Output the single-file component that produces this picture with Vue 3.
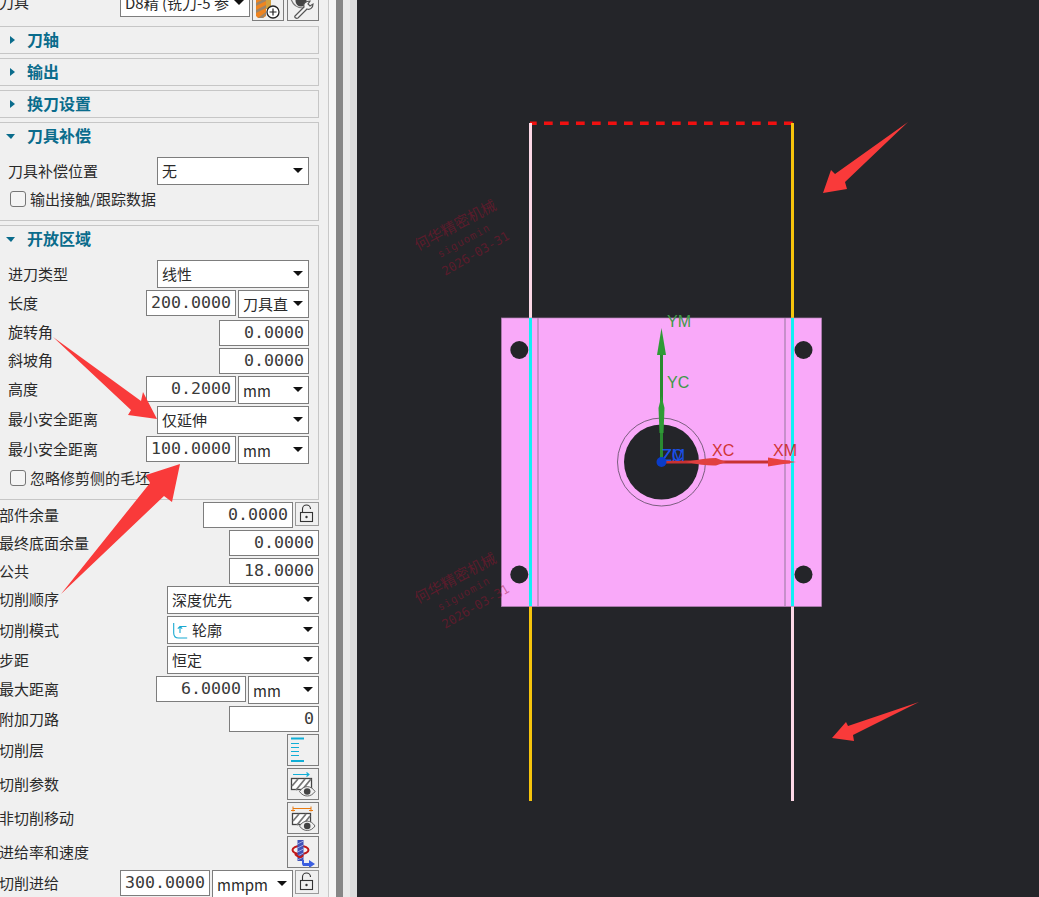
<script setup>
</script>

<template>
  <div class="app">
    <aside class="panel">
      <div class="scroll">
        <div class="row tool">
          <span class="lab">刀具</span>
          <div class="sel w130"><span>D8精 (铣刀-5 参</span><i class="caret"></i></div>
          <button class="ib">
            <svg width="30" height="30" viewBox="0 0 30 30">
              <rect x="12" y="9" width="6" height="10" fill="#d0a040" />
              <path d="M3 0h10v26l-3 2H5l-2-2z" fill="#ee8420" />
              <path d="M3 13l10-5v3L3 16zM3 20l10-5v3L3 23zM5 28l8-6v2l-3 4z" fill="#9c8468" />
              <circle cx="20" cy="22" r="6" fill="#fff" stroke="#222" stroke-width="1.300" />
              <path d="M16.500 22h7M20 18.500v7" stroke="#222" stroke-width="1.200" />
            </svg>
          </button>
          <button class="ib">
            <svg width="30" height="30" viewBox="0 0 30 30">
              <path d="M3 9c2 6 6 9 12 9" fill="none" stroke="#777" stroke-width="1.200" />
              <circle cx="13" cy="11" r="5.500" fill="#444" />
              <path d="M7 26l9-9c-1-3 1-6 6-6l-2 3 2 2 3-2c0 4-3 6-6 5l-9 9c-2 1-4-1-3-2z" fill="#f4f4f4" stroke="#555" stroke-width="1.200" />
            </svg>
          </button>
        </div>

        <div class="grp closed"><div class="hd"><i class="tri-r"></i>刀轴</div></div>
        <div class="grp closed"><div class="hd"><i class="tri-r"></i>输出</div></div>
        <div class="grp closed"><div class="hd"><i class="tri-r"></i>换刀设置</div></div>

        <div class="grp">
          <div class="hd"><i class="tri-d"></i>刀具补偿</div>
          <div class="body">
            <div class="row s low"><span class="lab">刀具补偿位置</span><div class="sel w152"><span>无</span><i class="caret"></i></div></div>
            <label class="chk"><i class="box"></i><span>输出接触/跟踪数据</span></label>
          </div>
        </div>

        <div class="grp">
          <div class="hd"><i class="tri-d"></i>开放区域</div>
          <div class="body">
            <div class="row s low"><span class="lab">进刀类型</span><div class="sel w152"><span>线性</span><i class="caret"></i></div></div>
            <div class="row s"><span class="lab">长度</span><div class="num">200.0000</div><div class="sel w71"><span>刀具直</span><i class="caret"></i></div></div>
            <div class="row"><span class="lab">旋转角</span><div class="num">0.0000</div></div>
            <div class="row"><span class="lab">斜坡角</span><div class="num">0.0000</div></div>
            <div class="row s"><span class="lab">高度</span><div class="num">0.2000</div><div class="sel w71"><span class="u">mm</span><i class="caret"></i></div></div>
            <div class="row s"><span class="lab">最小安全距离</span><div class="sel w152"><span>仅延伸</span><i class="caret"></i></div></div>
            <div class="row s"><span class="lab">最小安全距离</span><div class="num">100.0000</div><div class="sel w71"><span class="u">mm</span><i class="caret"></i></div></div>
            <label class="chk"><i class="box"></i><span>忽略修剪侧的毛坯</span></label>
          </div>
        </div>

        <div class="list">
          <div class="row low"><span class="lab">部件余量</span><div class="num">0.0000</div><button class="lock"><svg width="22" height="22" viewBox="0 0 22 22"><path d="M6.500 9V6a4 4 0 0 1 8 0" fill="none" stroke="#333" stroke-width="1.100" /><rect x="4.500" y="9.500" width="12" height="9" fill="none" stroke="#333" stroke-width="1.100" /><circle cx="10.500" cy="14" r="1.200" fill="#333" /></svg></button></div>
          <div class="row low"><span class="lab">最终底面余量</span><div class="num">0.0000</div></div>
          <div class="row low"><span class="lab">公共</span><div class="num">18.0000</div></div>
          <div class="row s"><span class="lab">切削顺序</span><div class="sel w152"><span>深度优先</span><i class="caret"></i></div></div>
          <div class="row s low"><span class="lab">切削模式</span><div class="sel w152">
            <svg class="mode" width="15" height="18" viewBox="0 0 15 18"><path d="M.7 2v10c0 3 2 5 5 5h8.500M7 12V5.500h6.500M4.800 7.700L7 5.500l2.200 2.200" fill="none" stroke="#19a9d1" stroke-width="1.100" /></svg>
            <span>轮廓</span><i class="caret"></i></div></div>
          <div class="row s low"><span class="lab">步距</span><div class="sel w152"><span>恒定</span><i class="caret"></i></div></div>
          <div class="row s"><span class="lab">最大距离</span><div class="num">6.0000</div><div class="sel w71"><span class="u">mm</span><i class="caret"></i></div></div>
          <div class="row low"><span class="lab">附加刀路</span><div class="num">0</div></div>
          <div class="row b low"><span class="lab">切削层</span><button class="ib">
            <svg width="30" height="30" viewBox="0 0 30 30">
              <path d="M3 3.500h13M3 26h13" stroke="#10aed6" stroke-width="2" />
              <path d="M3 8.500h8M3 12.500h8M3 16.500h8M3 20.500h8" stroke="#10aed6" stroke-width="1" />
            </svg>
          </button></div>
          <div class="row b low"><span class="lab">切削参数</span><button class="ib">
            <svg width="30" height="30" viewBox="0 0 30 30">
              <path d="M5 5.500h16M18.500 3.500l2.500 2-2.500 2" fill="none" stroke="#10aed6" stroke-width="1.100" />
              <rect x="3.500" y="9.500" width="20" height="11" fill="#fff" stroke="#444" stroke-width="1.300" />
              <path d="M4 17l6-7M8 21l9-11M14 21l9-11" stroke="#777" stroke-width="1.800" />
              <path d="M11.500 22.500c4-6.500 11.500-6.500 15.500 0c-4 6-11.500 6-15.500 0z" fill="#f0f0f0" stroke="#666" stroke-width="1" />
              <circle cx="19.200" cy="22.500" r="3.300" fill="#444" />
            </svg>
          </button></div>
          <div class="row b low"><span class="lab">非切削移动</span><button class="ib">
            <svg width="30" height="30" viewBox="0 0 30 30">
              <path d="M5 5.500h18M5 3.500v5M23 3.500v5M3 7.500h4M21 7.500h4" fill="none" stroke="#e87a10" stroke-width="1" />
              <rect x="4.500" y="10.500" width="18" height="11" fill="#fff" stroke="#444" stroke-width="1.300" />
              <path d="M5 18l6-7M9 22l9-11M15 22l7-9" stroke="#777" stroke-width="1.800" />
              <path d="M11.500 23c4-6.500 11.500-6.500 15.500 0c-4 6-11.500 6-15.500 0z" fill="#f0f0f0" stroke="#666" stroke-width="1" />
              <circle cx="19.200" cy="23" r="3.300" fill="#444" />
            </svg>
          </button></div>
          <div class="row b low"><span class="lab">进给率和速度</span><button class="ib">
            <svg width="30" height="30" viewBox="0 0 30 30">
              <ellipse cx="12.500" cy="13" rx="8" ry="4" fill="none" stroke="#c01818" stroke-width="2" />
              <rect x="9.500" y="3" width="6" height="21" fill="#4052b8" />
              <path d="M9.500 7l6-3M9.500 11l6-3M9.500 15l6-3M9.500 19l6-3M9.500 23l6-3" stroke="#9aa4e0" stroke-width="1" />
              <path d="M15 18c-1 2-3 4-8-1" fill="none" stroke="#c01818" stroke-width="2" />
              <path d="M14 23h2v3h5v-3l6 4-6 4v-2h-6l-1-2z" fill="#3b5ee0" />
            </svg>
          </button></div>
          <div class="row low"><span class="lab">切削进给</span><div class="num">300.0000</div><div class="sel w81"><span class="u">mmpm</span><i class="caret"></i></div><button class="lock"><svg width="22" height="22" viewBox="0 0 22 22"><path d="M6.500 9V6a4 4 0 0 1 8 0" fill="none" stroke="#333" stroke-width="1.100" /><rect x="4.500" y="9.500" width="12" height="9" fill="none" stroke="#333" stroke-width="1.100" /><circle cx="10.500" cy="14" r="1.200" fill="#333" /></svg></button></div>
        </div>
      </div>
    </aside>

    <div class="strips"><i class="s1"></i><i class="s2"></i><i class="s3"></i><i class="s4"></i></div>

    <svg class="view" width="682" height="897" viewBox="357 0 682 897">
      <rect x="357" y="0" width="682" height="897" fill="#242529" />

      <path d="M530 123.300H793" stroke="#f01010" stroke-width="3.500" stroke-dasharray="8.700 7.300" stroke-dashoffset="2" />
      <path d="M530.500 123V318" stroke="#fcd8e6" stroke-width="3" />
      <path d="M792.500 123V318" stroke="#f6c40c" stroke-width="3" />
      <path d="M530.500 606V801" stroke="#f6c40c" stroke-width="3" />
      <path d="M792.500 606V801" stroke="#fcd8e6" stroke-width="3" />

      <rect x="501.500" y="318" width="320" height="288.500" fill="#f9a9f9" stroke="#b583b8" stroke-width=".7" />
      <path d="M538 318V606M785 318V606" stroke="#bb8ac0" stroke-width="1.600" />
      <path d="M530.500 318V606M792.500 318V606" stroke="#10f0f4" stroke-width="3" />

      <g fill="#242529">
        <circle cx="519.300" cy="350" r="9" />
        <circle cx="803.500" cy="350" r="9" />
        <circle cx="519.300" cy="574.500" r="9" />
        <circle cx="803.500" cy="574.500" r="9" />
        <circle cx="661.500" cy="462" r="37.500" />
      </g>
      <circle cx="661.500" cy="462" r="44" fill="none" stroke="#5a4a60" stroke-width=".8" />

      <g class="wm" fill="#a01030" fill-opacity=".45">
        <text transform="translate(418 251) rotate(-28)" font-size="15">何华精密机械</text>
        <text transform="translate(440 258) rotate(-29)" font-size="10.500" letter-spacing="1">siguomin</text>
        <text transform="translate(445 276) rotate(-30)" font-size="12.500">2026-03-31</text>
        <text transform="translate(418 604) rotate(-28)" font-size="15">何华精密机械</text>
        <text transform="translate(440 611) rotate(-29)" font-size="10.500" letter-spacing="1">siguomin</text>
        <text transform="translate(445 629) rotate(-30)" font-size="12.500">2026-03-31</text>
      </g>

      <g class="ax">
        <path d="M661.500 462V350" stroke="#2a8a30" stroke-width="3" />
        <path d="M661.500 328L666 355H657z" fill="#2f9a36" />
        <path d="M661.500 396l3 12l-1 25h-4l-1-25z" fill="#2f9a36" />
        <path d="M661.500 462H790" stroke="#c83232" stroke-width="3" />
        <path d="M796 462l-28 4.500v-9z" fill="#e84040" />
        <path d="M686 462Q705 458 716 458L726 462L716 465.500Q705 466 686 462z" fill="#e04040" />
        <text x="667" y="327" font-size="16" fill="#3f9a48">YM</text>
        <text x="667" y="388" font-size="16" fill="#3f9a48">YC</text>
        <text x="712" y="456" font-size="16" fill="#cf3535">XC</text>
        <text x="773" y="456" font-size="16" fill="#cf3535">XM</text>
        <text x="662" y="461" font-size="16" fill="#1a50e8">ZC</text>
        <text x="662" y="461" font-size="16" fill="#1a50e8">ZM</text>
        <circle cx="661.500" cy="462" r="5" fill="#0a3cc8" />
      </g>
    </svg>

    <svg class="over" width="1039" height="897" viewBox="0 0 1039 897">
      <g fill="#f93a3a">
        <path d="M908 122L845 182L847 189L823 193L831 170L835 174z" />
        <path d="M919 702L853 735L854 741L832 738L846 722L848 726z" />
        <path d="M53 337L141 401L143 392L157 419L128 415L131 410z" />
        <path d="M61 594L150 483L146 475L180 464L172 502L164 496z" />
      </g>
    </svg>
  </div>
</template>

<style>
html, body { margin: 0; background: #f0f0f0; overflow: hidden; }
</style>

<style scoped>
.app {
  position: relative;
  display: flex;
  width: 1039px;
  height: 897px;
  overflow: hidden;
  font-family: "Noto Sans CJK SC", "Liberation Sans", sans-serif;
  font-size: 15px;
  color: #2a2a2a;
}
.panel {
  width: 328px;
  height: 897px;
  flex: none;
  overflow: hidden;
  background: #f0f0f0;
}
.scroll {
  width: 320px;
  margin: -11px 0 0 -1px;
}
.row {
  display: flex;
  align-items: flex-start;
  justify-content: flex-end;
  gap: 2px;
  min-height: 26px;
}
.row.s { min-height: 28px; }
.row.b { min-height: 32px; }
.row > .lab {
  flex: 1;
  line-height: 24px;
  white-space: nowrap;
}
.row.s > .lab { line-height: 26px; }
.row.b > .lab { line-height: 30px; }
.row.low > .lab { padding-top: 1px; }
.tool { min-height: 32px; margin-bottom: 5px; }
.tool > .lab { line-height: 26px; }
.tool .ib + .ib { margin-left: 1px; }

.grp {
  margin: 0 0 4px -3px;
  border: 1px solid #c6c6c6;
  box-sizing: border-box;
}
.grp.closed { height: 28px; }
.hd {
  display: flex;
  align-items: center;
  height: 26px;
  box-sizing: border-box;
  padding: 0 0 2px 30px;
  position: relative;
  font-size: 16px;
  font-weight: 700;
  color: #0a6c8c;
}
.tri-r, .tri-d {
  position: absolute;
  width: 0;
  height: 0;
}
.tri-r {
  left: 13px;
  top: 9px;
  border-left: 5px solid #0a6c8c;
  border-top: 4px solid transparent;
  border-bottom: 4px solid transparent;
}
.tri-d {
  left: 9px;
  top: 11px;
  border-top: 5px solid #0a6c8c;
  border-left: 5px solid transparent;
  border-right: 4px solid transparent;
}
.body {
  display: flex;
  flex-direction: column;
  gap: 2px;
  padding: 8px 9px 11px 11px;
}
.chk {
  display: flex;
  align-items: center;
  height: 20px;
  margin-top: 2px;
  padding-left: 2px;
  white-space: nowrap;
}
.chk span { margin-top: -2px; }
.box {
  width: 14px;
  height: 14px;
  margin-right: 4px;
  border: 1px solid #767676;
  border-radius: 3px;
  background: #f4f4f4;
}
.list {
  display: flex;
  flex-direction: column;
  gap: 2px;
  margin-top: -2px;
}
.sel {
  position: relative;
  display: flex;
  align-items: center;
  height: 28px;
  box-sizing: border-box;
  padding: 0 18px 2px 4px;
  border: 1px solid #7d7d7d;
  background: #fff;
  white-space: nowrap;
  overflow: hidden;
}
.u { margin-top: 2px; }
.w130 { width: 130px; }
.w152 { width: 152px; }
.w71 { width: 71px; }
.w81 { width: 81px; }
.caret {
  position: absolute;
  right: 5px;
  top: 10px;
  border-top: 5px solid #111;
  border-left: 5px solid transparent;
  border-right: 5px solid transparent;
}
.mode { margin: 2px 4px 0 1px; flex: none; }
.num {
  width: 90px;
  height: 26px;
  box-sizing: border-box;
  border: 1px solid #7d7d7d;
  background: #fff;
  padding-right: 4px;
  text-align: right;
  font-family: "DejaVu Sans Mono", "Liberation Mono", monospace;
  font-size: 16.6px;
  line-height: 23px;
  color: #3a3a3a;
}
.ib {
  display: flex;
  align-items: center;
  justify-content: center;
  width: 32px;
  height: 32px;
  box-sizing: border-box;
  padding: 0;
  border: 1px solid #7d7d7d;
  background: #f0f0f0;
}
.lock {
  display: flex;
  align-items: center;
  justify-content: center;
  width: 24px;
  height: 24px;
  box-sizing: border-box;
  padding: 0;
  border: 1px solid #9a9a9a;
  background: #f0f0f0;
}
.strips {
  display: flex;
  flex: none;
  width: 29px;
  height: 897px;
}
.strips i { display: block; height: 100%; }
.s1 { width: 8px; background: #f6f6f6; border-left: 1px solid #c8c8c8; box-sizing: border-box; }
.s2 { width: 7px; background: #868686; }
.s3 { width: 7px; background: #e9e9e9; }
.s4 { width: 7px; background: #dcdcdc; }
.view { display: block; flex: none; }
.view text { font-family: "Liberation Sans", sans-serif; }
.view .wm text { font-family: "DejaVu Sans Mono", "Noto Sans CJK SC", monospace; }
.over {
  position: absolute;
  left: 0;
  top: 0;
  pointer-events: none;
}
</style>
